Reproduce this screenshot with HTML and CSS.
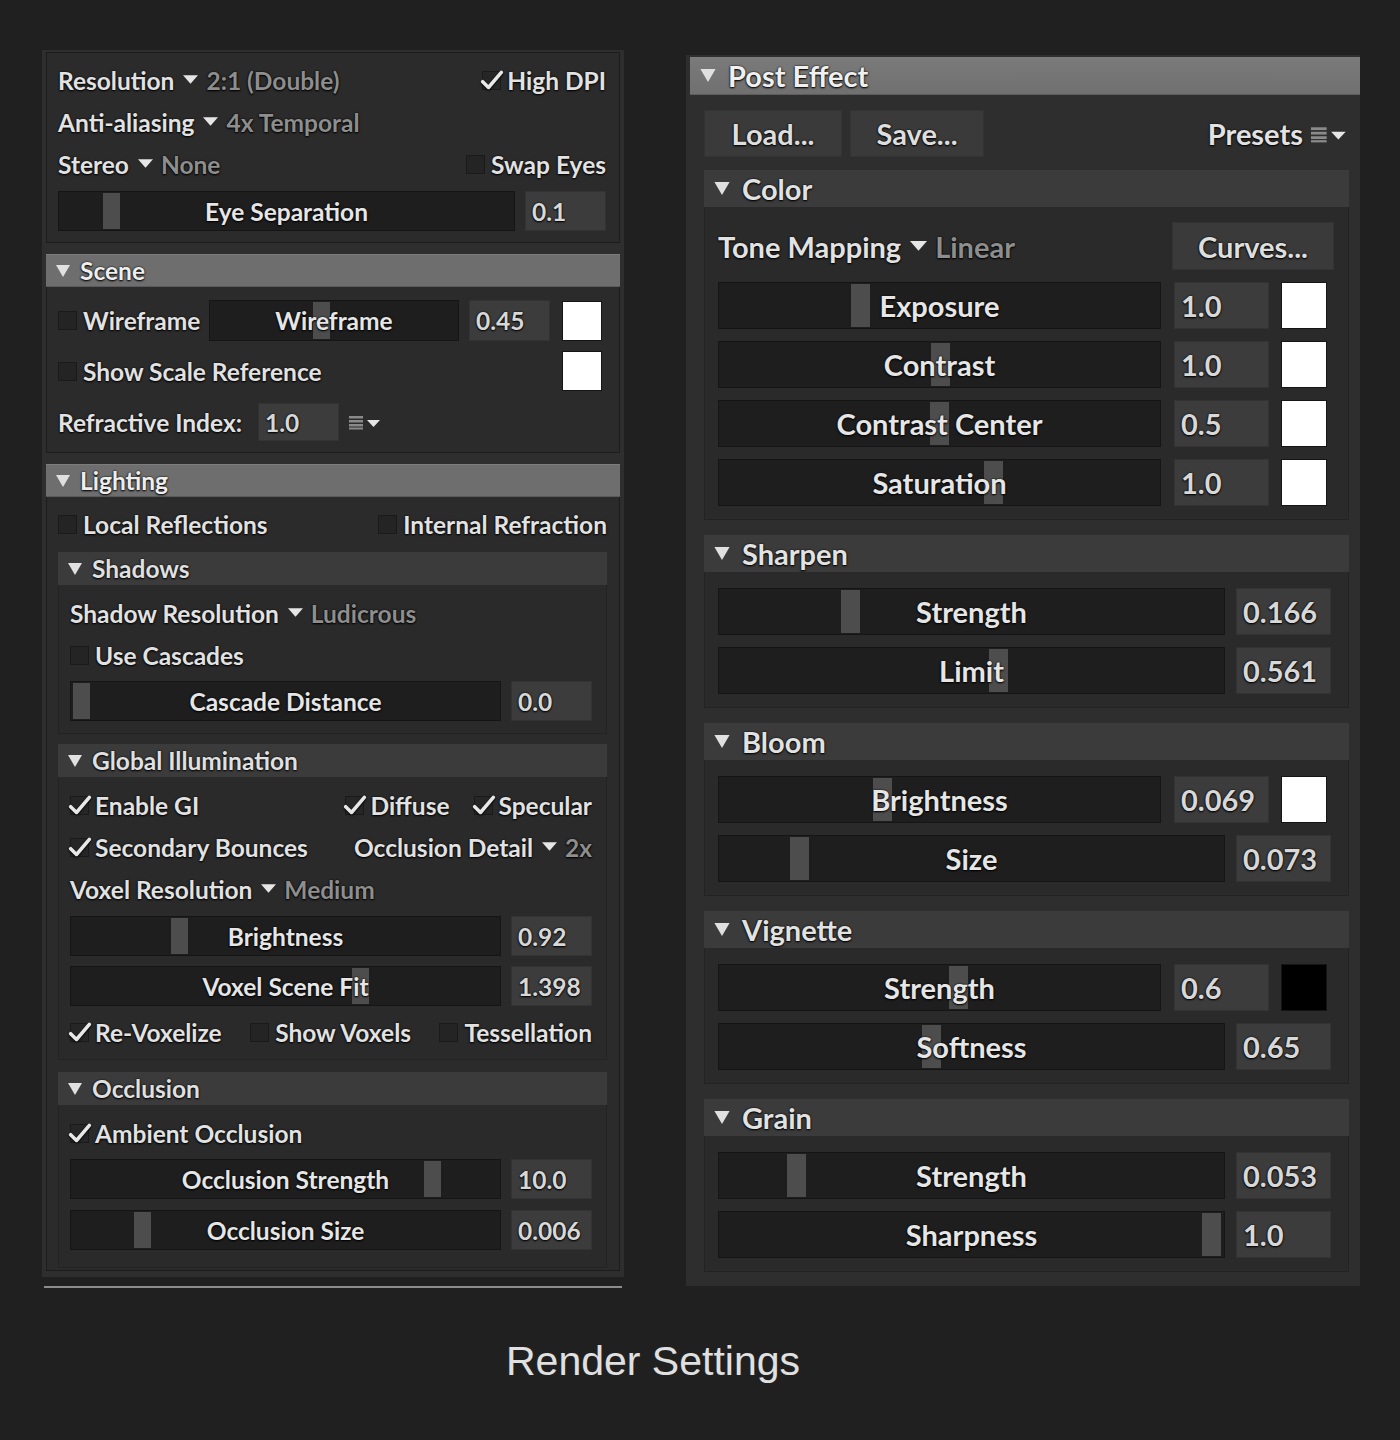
FILE: index.html
```html
<!DOCTYPE html>
<html>
<head>
<meta charset="utf-8">
<link rel="stylesheet" href="styles.css">
</head>
<body>
<div class="page">
  <div class="panels">
    <div class="lcol">
      <div class="lp">
        <div class="blk top">
          <div class="row">
            <span class="lbl">Resolution</span><svg class="dd" viewBox="0 0 14 9"><polygon points="0,0 14,0 7,8"/></svg><span class="dim">2:1 (Double)</span>
            <span class="push"></span>
            <span class="chk on"><svg viewBox="0 0 20 18"><path d="M2 10 L7 15 L18 2"/></svg></span><span class="lbl">High DPI</span>
          </div>
          <div class="row">
            <span class="lbl">Anti-aliasing</span><svg class="dd" viewBox="0 0 14 9"><polygon points="0,0 14,0 7,8"/></svg><span class="dim">4x Temporal</span>
          </div>
          <div class="row">
            <span class="lbl">Stereo</span><svg class="dd" viewBox="0 0 14 9"><polygon points="0,0 14,0 7,8"/></svg><span class="dim">None</span>
            <span class="push"></span>
            <span class="chk"></span><span class="lbl">Swap Eyes</span>
          </div>
          <div class="srow">
            <div class="slider"><span class="handle" style="left:44px"></span><span class="slabel">Eye Separation</span></div>
            <div class="val">0.1</div>
          </div>
        </div>

        <div class="hdr"><svg class="tri" viewBox="0 0 14 12"><polygon points="0,0 14,0 7,12"/></svg>Scene</div>
        <div class="blk scene">
          <div class="row wf">
            <span class="chk"></span><span class="lbl">Wireframe</span>
            <div class="slider wfs"><span class="handle" style="left:103px"></span><span class="slabel">Wireframe</span></div>
            <div class="val">0.45</div>
            <span class="sw white"></span>
          </div>
          <div class="row ssr">
            <span class="chk"></span><span class="lbl">Show Scale Reference</span>
            <span class="push"></span>
            <span class="sw white"></span>
          </div>
          <div class="row ri">
            <span class="lbl">Refractive Index:</span>
            <div class="val rival">1.0</div>
            <svg class="menuic" viewBox="0 0 34 16"><rect x="0" y="2" width="14" height="2.5"/><rect x="0" y="6" width="14" height="2.5"/><rect x="0" y="10" width="14" height="2.5"/><rect x="0" y="13.5" width="14" height="2"/><polygon class="w" points="18,6 31,6 24.5,13"/></svg>
          </div>
        </div>

        <div class="hdr"><svg class="tri" viewBox="0 0 14 12"><polygon points="0,0 14,0 7,12"/></svg>Lighting</div>
        <div class="blk light">
          <div class="row lr">
            <span class="chk"></span><span class="lbl">Local Reflections</span>
            <span class="push"></span>
            <span class="chk"></span><span class="lbl">Internal Refraction</span>
          </div>

          <div class="sub shadows">
            <div class="shdr"><svg class="tri" viewBox="0 0 14 12"><polygon points="0,0 14,0 7,12"/></svg>Shadows</div>
            <div class="sbody">
              <div class="row">
                <span class="lbl">Shadow Resolution</span><svg class="dd" viewBox="0 0 14 9"><polygon points="0,0 14,0 7,8"/></svg><span class="dim">Ludicrous</span>
              </div>
              <div class="row">
                <span class="chk"></span><span class="lbl">Use Cascades</span>
              </div>
              <div class="srow s5">
                <div class="slider"><span class="handle" style="left:2px"></span><span class="slabel">Cascade Distance</span></div>
                <div class="val">0.0</div>
              </div>
            </div>
          </div>

          <div class="sub gi">
            <div class="shdr"><svg class="tri" viewBox="0 0 14 12"><polygon points="0,0 14,0 7,12"/></svg>Global Illumination</div>
            <div class="sbody">
              <div class="row">
                <span class="chk on"><svg viewBox="0 0 20 18"><path d="M2 10 L7 15 L18 2"/></svg></span><span class="lbl">Enable GI</span>
                <span class="push"></span>
                <span class="chk on"><svg viewBox="0 0 20 18"><path d="M2 10 L7 15 L18 2"/></svg></span><span class="lbl">Diffuse</span>
                <span class="chk on gap26"><svg viewBox="0 0 20 18"><path d="M2 10 L7 15 L18 2"/></svg></span><span class="lbl">Specular</span>
              </div>
              <div class="row">
                <span class="chk on"><svg viewBox="0 0 20 18"><path d="M2 10 L7 15 L18 2"/></svg></span><span class="lbl">Secondary Bounces</span>
                <span class="push"></span>
                <span class="lbl">Occlusion Detail</span><svg class="dd" viewBox="0 0 14 9"><polygon points="0,0 14,0 7,8"/></svg><span class="dim">2x</span>
              </div>
              <div class="row">
                <span class="lbl">Voxel Resolution</span><svg class="dd" viewBox="0 0 14 9"><polygon points="0,0 14,0 7,8"/></svg><span class="dim">Medium</span>
              </div>
              <div class="srow s6">
                <div class="slider"><span class="handle" style="left:100px"></span><span class="slabel">Brightness</span></div>
                <div class="val">0.92</div>
              </div>
              <div class="srow s10">
                <div class="slider"><span class="handle" style="left:281px"></span><span class="slabel">Voxel Scene Fit</span></div>
                <div class="val">1.398</div>
              </div>
              <div class="row spread s5">
                <span class="grp"><span class="chk on"><svg viewBox="0 0 20 18"><path d="M2 10 L7 15 L18 2"/></svg></span><span class="lbl">Re-Voxelize</span></span>
                <span class="grp"><span class="chk"></span><span class="lbl">Show Voxels</span></span>
                <span class="grp"><span class="chk"></span><span class="lbl">Tessellation</span></span>
              </div>
            </div>
          </div>

          <div class="sub occ">
            <div class="shdr"><svg class="tri" viewBox="0 0 14 12"><polygon points="0,0 14,0 7,12"/></svg>Occlusion</div>
            <div class="sbody">
              <div class="row">
                <span class="chk on"><svg viewBox="0 0 20 18"><path d="M2 10 L7 15 L18 2"/></svg></span><span class="lbl">Ambient Occlusion</span>
              </div>
              <div class="srow s5">
                <div class="slider"><span class="handle" style="left:353px"></span><span class="slabel">Occlusion Strength</span></div>
                <div class="val">10.0</div>
              </div>
              <div class="srow s11">
                <div class="slider"><span class="handle" style="left:63px"></span><span class="slabel">Occlusion Size</span></div>
                <div class="val">0.006</div>
              </div>
            </div>
          </div>
        </div>
      </div>
      <div class="lline"></div>
    </div>

    <div class="rp">
      <div class="rhdr"><svg class="tri" viewBox="0 0 14 12"><polygon points="0,0 14,0 7,12"/></svg>Post Effect</div>
      <div class="rbody">
        <div class="btnrow">
          <div class="btn load">Load...</div>
          <div class="btn save">Save...</div>
          <span class="push"></span>
          <span class="lbl">Presets</span>
          <svg class="menuic big" viewBox="0 0 34 16"><rect x="0" y="2" width="14" height="2.5"/><rect x="0" y="6" width="14" height="2.5"/><rect x="0" y="10" width="14" height="2.5"/><rect x="0" y="13.5" width="14" height="2"/><polygon class="w" points="18,6 31,6 24.5,13"/></svg>
        </div>

        <div class="rsub first">
          <div class="rshdr"><svg class="tri" viewBox="0 0 14 12"><polygon points="0,0 14,0 7,12"/></svg>Color</div>
          <div class="rsbody">
            <div class="trow">
              <span class="lbl">Tone Mapping</span><svg class="dd" viewBox="0 0 14 9"><polygon points="0,0 14,0 7,8"/></svg><span class="dim">Linear</span>
              <span class="push"></span>
              <div class="btn curves">Curves...</div>
            </div>
            <div class="rrow wsw">
              <div class="slider"><span class="handle" style="left:132px"></span><span class="slabel">Exposure</span></div>
              <div class="val">1.0</div><span class="sw white"></span>
            </div>
            <div class="rrow wsw">
              <div class="slider"><span class="handle" style="left:212px"></span><span class="slabel">Contrast</span></div>
              <div class="val">1.0</div><span class="sw white"></span>
            </div>
            <div class="rrow wsw">
              <div class="slider"><span class="handle" style="left:211px"></span><span class="slabel">Contrast Center</span></div>
              <div class="val">0.5</div><span class="sw white"></span>
            </div>
            <div class="rrow wsw">
              <div class="slider"><span class="handle" style="left:265px"></span><span class="slabel">Saturation</span></div>
              <div class="val">1.0</div><span class="sw white"></span>
            </div>
          </div>
        </div>

        <div class="rsub">
          <div class="rshdr"><svg class="tri" viewBox="0 0 14 12"><polygon points="0,0 14,0 7,12"/></svg>Sharpen</div>
          <div class="rsbody">
            <div class="rrow">
              <div class="slider"><span class="handle" style="left:122px"></span><span class="slabel">Strength</span></div>
              <div class="val">0.166</div>
            </div>
            <div class="rrow">
              <div class="slider"><span class="handle" style="left:270px"></span><span class="slabel">Limit</span></div>
              <div class="val">0.561</div>
            </div>
          </div>
        </div>

        <div class="rsub">
          <div class="rshdr"><svg class="tri" viewBox="0 0 14 12"><polygon points="0,0 14,0 7,12"/></svg>Bloom</div>
          <div class="rsbody">
            <div class="rrow wsw">
              <div class="slider"><span class="handle" style="left:154px"></span><span class="slabel">Brightness</span></div>
              <div class="val">0.069</div><span class="sw white"></span>
            </div>
            <div class="rrow">
              <div class="slider"><span class="handle" style="left:71px"></span><span class="slabel">Size</span></div>
              <div class="val">0.073</div>
            </div>
          </div>
        </div>

        <div class="rsub">
          <div class="rshdr"><svg class="tri" viewBox="0 0 14 12"><polygon points="0,0 14,0 7,12"/></svg>Vignette</div>
          <div class="rsbody">
            <div class="rrow wsw">
              <div class="slider"><span class="handle" style="left:230px"></span><span class="slabel">Strength</span></div>
              <div class="val">0.6</div><span class="sw black"></span>
            </div>
            <div class="rrow">
              <div class="slider"><span class="handle" style="left:203px"></span><span class="slabel">Softness</span></div>
              <div class="val">0.65</div>
            </div>
          </div>
        </div>

        <div class="rsub">
          <div class="rshdr"><svg class="tri" viewBox="0 0 14 12"><polygon points="0,0 14,0 7,12"/></svg>Grain</div>
          <div class="rsbody">
            <div class="rrow">
              <div class="slider"><span class="handle" style="left:68px"></span><span class="slabel">Strength</span></div>
              <div class="val">0.053</div>
            </div>
            <div class="rrow">
              <div class="slider"><span class="handle" style="left:483px"></span><span class="slabel">Sharpness</span></div>
              <div class="val">1.0</div>
            </div>
          </div>
        </div>
      </div>
    </div>
  </div>
  <div class="caption">Render Settings</div>
</div>
</body>
</html>
```

FILE: styles.css
```css
* { box-sizing: border-box; }
html, body { margin: 0; padding: 0; }
body {
  background: #202020;
  width: 1400px;
  height: 1440px;
  font-family: Lato, "Open Sans", sans-serif;
  font-weight: 700;
  color: #e4e4e4;
}
.page { padding: 50px 0 0 42px; }
.panels { display: flex; align-items: flex-start; gap: 62px; }

.lbl, .slabel, .val, .dim, .hdr, .shdr, .rhdr, .rshdr, .btn {
  text-shadow: 0 0 2px #000, 0 1px 2px #000;
  white-space: nowrap;
}
.lbl { color: #e2e2e2; }
.dim { color: #8e8e8e; }
.push { flex: 1; }

/* ---------- left panel ---------- */
.lcol { width: 582px; display: flex; flex-direction: column; }
.lp {
  background: #2e2e2e;
  padding: 2px 4px 6px 4px;
  font-size: 24.5px;
}
.lline { height: 2px; margin: 9px 2px 0 2px; background: #8c8c8c; }

.blk {
  background: #2b2b2b;
  border: 1px solid #1c1c1c;
}
.top { padding: 6px 13px 11px 11px; }
.row { display: flex; align-items: center; height: 42px; }
.srow { display: flex; align-items: stretch; height: 40px; gap: 10px; }
.top .srow { margin-top: 6px; }

.dd { width: 15px; height: 10px; margin: 0 8px 0 9px; fill: #e6e6e6; flex: none; }
.tri { width: 14px; height: 12px; fill: #e0e0e0; margin-right: 10px; flex: none; }

.chk {
  width: 19px; height: 19px; flex: none;
  background: #242424;
  border: 1px solid #1a1a1a;
  margin-right: 6px;
  position: relative;
}
.chk.on { background: #262626; }
.chk svg {
  position: absolute; left: -3px; top: -2px;
  width: 24px; height: 21px;
  fill: none; stroke: #e8e8e8; stroke-width: 3; stroke-linecap: round; stroke-linejoin: round;
  filter: drop-shadow(0 1px 1px #000);
}
.chk.on + .lbl { margin-left: 0; }

.slider {
  flex: 1;
  position: relative;
  background: #1e1e1e;
  border: 1px solid #151515;
  display: flex; align-items: center; justify-content: center;
}
.handle {
  position: absolute; top: 1px; bottom: 1px; width: 17px;
  background: #4d4d4d;
}
.slabel { position: relative; color: #e6e6e6; }
.val {
  width: 81px; flex: none;
  background: #3c3c3c;
  border: 1px solid #333;
  color: #d8d8d8;
  display: flex; align-items: center;
  padding-left: 6px;
}
.sw { width: 40px; height: 40px; flex: none; border: 1px solid #151515; }
.sw.white { background: #ffffff; }
.sw.black { background: #000000; }

.hdr {
  height: 33px; margin-top: 11px;
  background: #6e6e6e;
  border-top: 1px solid #7c7c7c;
  border-bottom: 1px solid #5a5a5a;
  display: flex; align-items: center;
  padding-left: 10px;
  color: #eeeeee;
}
.hdr + .blk { border-top: none; }

.scene { padding: 13px 17px 11px 11px; }
.scene .wf { height: 41px; }
.scene .wf .wfs { flex: none; width: 250px; height: 41px; margin-left: auto; }
.scene .wf .val { height: 41px; margin-left: 10px; }
.scene .wf .sw { margin-left: 12px; }
.scene .ssr { height: 40px; margin-top: 10px; }
.scene .ri { height: 38px; margin-top: 12px; }
.scene .ri .rival { height: 38px; margin-left: 16px; }
.menuic { width: 34px; height: 16px; margin-left: 10px; flex: none; }
.menuic rect { fill: #8a8a8a; }
.menuic .w { fill: #e6e6e6; }

.light { padding: 7px 12px 2px 11px; }
.light .lr { height: 40px; }
.sub { margin-top: 8px; }
.sub.gi { margin-top: 10px; }
.sub.occ { margin-top: 12px; }
.shdr {
  height: 33px;
  background: #3b3b3b;
  display: flex; align-items: center;
  padding-left: 10px;
  color: #e0e0e0;
}
.sbody {
  background: #2a2a2a;
  border: 1px solid #232323;
  border-top: none;
  padding: 7px 14px 12px 11px;
}
.shadows .sbody { padding-bottom: 12px; }
.gi .sbody { padding-bottom: 6px; }
.occ .sbody { padding-bottom: 17px; }
.s5 { margin-top: 5px; }
.s6 { margin-top: 6px; }
.s10 { margin-top: 10px; }
.s11 { margin-top: 11px; }
.gap26 { margin-left: 24px; }
.spread { justify-content: space-between; }
.grp { display: flex; align-items: center; }

/* ---------- right panel ---------- */
.rp {
  width: 674px;
  margin-top: 5px;
  background: #2e2e2e;
  padding: 2px 0 14px 4px;
  font-size: 29px;
}
.rhdr {
  height: 38px;
  background: linear-gradient(#7a7a7a, #707070);
  border-bottom: 1px solid #5c5c5c;
  display: flex; align-items: center;
  padding-left: 10px;
  color: #f0f0f0;
}
.rhdr .tri { width: 16px; height: 13px; margin-right: 12px; }
.rbody { padding: 0 11px 0 14px; }
.btnrow { display: flex; align-items: center; height: 47px; margin-top: 15px; }
.btn {
  background: #3a3a3a;
  border: 1px solid #333;
  height: 100%;
  display: flex; align-items: center; justify-content: center;
  color: #dedede;
}
.btn.load { width: 138px; }
.btn.save { width: 134px; margin-left: 8px; }
.btnrow .lbl { margin-right: 8px; }
.menuic.big { width: 38px; height: 18px; margin-left: 0; margin-right: 0; }

.rsub { margin-top: 15px; }
.rsub.first { margin-top: 13px; }
.rshdr {
  height: 37px;
  background: #3b3b3b;
  display: flex; align-items: center;
  padding-left: 10px;
  color: #e2e2e2;
}
.rshdr .tri { width: 16px; height: 13px; margin-right: 12px; }
.rsbody {
  background: #2a2a2a;
  border: 1px solid #232323;
  border-top: none;
  padding: 4px 17px 13px 13px;
}
.trow { display: flex; align-items: center; height: 48px; margin-top: 11px; }
.trow .btn.curves { width: 162px; margin-right: -3px; }
.trow .dd { width: 17px; height: 11px; }
.rrow { display: flex; align-items: stretch; height: 47px; margin-top: 12px; gap: 11px; }
.rrow.wsw { padding-right: 4px; gap: 13px; }
.rrow .val { width: 95px; padding-left: 6px; }
.rrow .sw { width: 46px; height: 47px; margin-left: -1px; }
.rrow .handle { width: 19px; }

.caption {
  width: 1222px;
  margin-top: 50px;
  text-align: center;
  font-family: "Liberation Sans", Arial, sans-serif;
  font-weight: 400;
  font-size: 41px;
  line-height: 46px;
  color: #e0e0e0;
}
```
